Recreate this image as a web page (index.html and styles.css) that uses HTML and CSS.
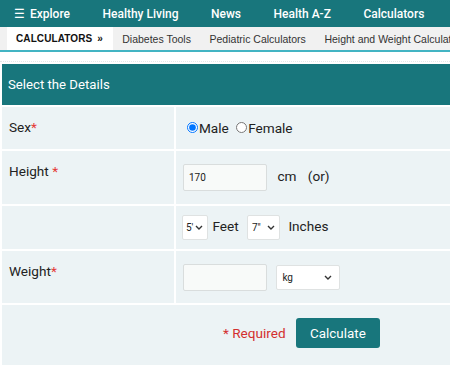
FILE: index.html
```html
<!DOCTYPE html>
<html lang="en">
<head>
    <meta charset="UTF-8">
    <meta name="viewport" content="width=device-width, initial-scale=1.0">
    <title>Height and Weight Calculator</title>
    <link rel="stylesheet" href="styles.css">
</head>
<body>

<div class="topnav">
    <a href="#"><span class="burger">&#9776;</span> Explore</a>
    <a href="#">Healthy Living</a>
    <a href="#">News</a>
    <a href="#">Health A-Z</a>
    <a href="#">Calculators</a>
</div>

<div class="subnav">
    <a class="current" href="#">CALCULATORS <span class="arrows">&raquo;</span></a>
    <a href="#">Diabetes Tools</a>
    <a href="#">Pediatric Calculators</a>
    <a href="#">Height and Weight Calculator</a>
</div>

<div class="calc">
    <table class="form">
        <tr>
            <th colspan="2">Select the Details</th>
        </tr>
        <tr class="row-sex">
            <td class="label">Sex<span class="star">*</span></td>
            <td class="value">
                <label class="radio"><input type="radio" name="sex" checked>Male</label>
                <label class="radio"><input type="radio" name="sex">Female</label>
            </td>
        </tr>
        <tr class="row-height">
            <td class="label">Height <span class="star">*</span></td>
            <td class="value">
                <input class="box" type="text" value="170">
                <span class="unit">cm</span>
                <span class="or">(or)</span>
            </td>
        </tr>
        <tr class="row-feet">
            <td class="label"></td>
            <td class="value">
                <select class="feet"><option>5'</option></select>
                <span class="unit-feet">Feet</span>
                <select class="inches"><option>7"</option></select>
                <span class="unit-inches">Inches</span>
            </td>
        </tr>
        <tr class="row-weight">
            <td class="label">Weight<span class="star">*</span></td>
            <td class="value">
                <input class="box" type="text">
                <select class="kg"><option>kg</option><option>lbs</option></select>
            </td>
        </tr>
        <tr class="row-submit">
            <td colspan="2">
                <span class="required">* Required</span>
                <button class="calculate">Calculate</button>
            </td>
        </tr>
    </table>
</div>

</body>
</html>
```

FILE: styles.css
```css
body {
    margin: 0;
    font-family: Roboto, "Liberation Sans", Arial, sans-serif;
    color: #222;
    background: #fff;
    overflow: hidden;
}
a { text-decoration: none; }

.topnav {
    display: flex;
    gap: 32.5px;
    height: 27px;
    align-items: center;
    padding-left: 14px;
    background: #18767c;
    white-space: nowrap;
}
.topnav a {
    color: #fff;
    font-size: 12px;
    font-weight: 500;
}
.burger { margin-right: 2px; }

.subnav {
    display: flex;
    height: 23px;
    padding-left: 7px;
    background: #f1f1f1;
    border-bottom: 2px solid #43b4c3;
    white-space: nowrap;
    font-family: "Liberation Sans", Arial, sans-serif;
}
.subnav a {
    display: flex;
    align-items: center;
    padding: 0 9.3px;
    font-size: 10.5px;
    color: #333;
}
.subnav .current {
    background: #fff;
    padding: 0 10px 0 9px;
    font-weight: bold;
    font-size: 10px;
    color: #111;
    letter-spacing: 0.1px;
}
.arrows { margin-left: 5px; }

.calc {
    margin-top: 9px;
    width: 470px;
}
.form {
    width: 100%;
    border-spacing: 2px;
    border-top: 1px dotted #e4e8e8;
    font-size: 13.6px;
}
.form th {
    height: 41px;
    padding: 0 6px;
    text-align: left;
    font-weight: normal;
    font-size: 13.2px;
    color: #fff;
    background: #18767c;
}
.form td {
    background: #ecf3f5;
    padding: 0 7px;
}
.form td.label {
    width: 158px;
    vertical-align: top;
    padding-top: 11px;
    line-height: 18px;
}
.form td.value { vertical-align: middle; }
.star { color: #e53935; }

.row-sex td { height: 31px; }
.row-height td { height: 42px; }
.row-feet td { height: 32px; }
.row-weight td { height: 41px; }

.radio {
    display: inline-flex;
    align-items: center;
    margin-right: 0;
}
.radio input {
    width: 11px;
    height: 11px;
    margin: 0 1px 0 4px;
}

.box {
    box-sizing: border-box;
    width: 84px;
    height: 27px;
    padding: 0 5px;
    border: 1px solid #d9dddd;
    border-radius: 2px;
    background: #f8faf9;
    font: 10px Roboto, Arial, sans-serif;
    color: #222;
    vertical-align: middle;
}
.unit { margin-left: 7px; }
.or { margin-left: 8px; }

select {
    appearance: none;
    box-sizing: border-box;
    height: 25px;
    padding: 0 0 0 4px;
    border: 1px solid #dfe2e2;
    border-radius: 2px;
    background: #fff url("data:image/svg+xml,%3Csvg xmlns='http://www.w3.org/2000/svg' width='8' height='5' viewBox='0 0 8 5'%3E%3Cpath d='M1 1l3 3 3-3' fill='none' stroke='%23333' stroke-width='1.4'/%3E%3C/svg%3E") no-repeat right 4px center;
    font: 10px Roboto, Arial, sans-serif;
    color: #222;
    vertical-align: middle;
}
.feet { width: 26px; padding-left: 3px; margin-left: -1px; }
.inches { width: 33px; margin-left: 5px; padding-left: 4px; }
.unit-feet { margin-left: 1px; }
.unit-inches { margin-left: 5px; }
.kg { width: 64px; margin-left: 6px; padding-left: 5px; background-position: right 7px center; }

.row-submit td {
    height: 50px;
    padding-left: 221px;
    vertical-align: top;
    padding-top: 13px;
}
.required {
    color: #d32f2f;
    margin-right: 7px;
}
.calculate {
    height: 30px;
    padding: 0 14px;
    border: none;
    border-radius: 3px;
    background: #18767c;
    color: #fff;
    font: 13.4px Roboto, Arial, sans-serif;
    cursor: pointer;
}
```
